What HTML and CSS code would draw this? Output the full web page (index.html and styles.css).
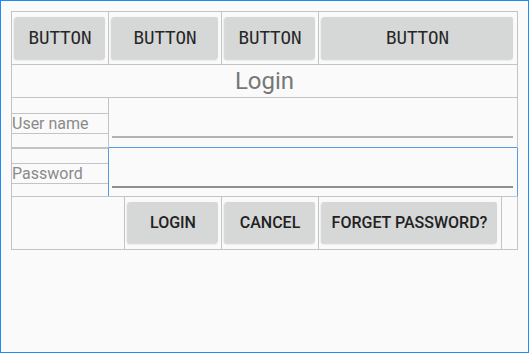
FILE: index.html
```html
<!DOCTYPE html>
<html lang="en">
<head>
  <meta charset="UTF-8" />
  <meta name="viewport" content="width=device-width, initial-scale=1.0"/>
  <title>Login</title>
  <link rel="stylesheet" href="styles.css">
</head>
<body>
  <div class="frame">
    <div class="layout">
      <div class="row toolbar">
        <div class="cell w96"><button class="btn mono">BUTTON</button></div>
        <div class="cell w112"><button class="btn mono">BUTTON</button></div>
        <div class="cell w96"><button class="btn mono">BUTTON</button></div>
        <div class="cell grow last"><button class="btn mono">BUTTON</button></div>
      </div>

      <div class="row title-row">
        <div class="title">Login</div>
      </div>

      <div class="row field-row user">
        <div class="label-cell">
          <div class="spacer top"></div>
          <div class="label">User name</div>
          <div class="spacer bottom"></div>
        </div>
        <div class="input-cell">
          <div class="input-line"></div>
        </div>
      </div>

      <div class="row field-row pass">
        <div class="label-cell">
          <div class="spacer top"></div>
          <div class="label">Password</div>
          <div class="spacer bottom"></div>
        </div>
        <div class="input-cell focused">
          <div class="input-line"></div>
        </div>
      </div>

      <div class="row actions">
        <div class="cell w112"></div>
        <div class="cell w96"><button class="btn">LOGIN</button></div>
        <div class="cell w96"><button class="btn">CANCEL</button></div>
        <div class="cell w182"><button class="btn">FORGET PASSWORD?</button></div>
        <div class="cell w15 last"></div>
      </div>
    </div>
  </div>
</body>
</html>
```

FILE: styles.css
```css
body {
  margin: 0;
  background: #fafafa;
  font-family: Roboto, "Noto Sans", sans-serif;
}

.frame {
  width: 529px;
  height: 353px;
  box-sizing: border-box;
  border: 1px solid #2089f3;
  padding: 10px;
  background: #fafafa;
}

.layout {
  width: 507px;
  box-sizing: border-box;
  border: 1px solid #c4c4c4;
}

.row {
  display: flex;
  border-bottom: 1px solid #c4c4c4;
}

.row:last-child {
  border-bottom: none;
}

.cell {
  border-right: 1px solid #c4c4c4;
  display: flex;
  flex-direction: column;
  box-sizing: content-box;
}

.cell.last {
  border-right: none;
}

.w96 { width: 96px; }
.w112 { width: 112px; }
.w182 { width: 182px; }
.w15 { width: 15px; }
.grow { flex: 1; }

/* buttons */
.btn {
  font-family: Roboto, sans-serif;
  font-weight: 500;
  font-size: 16px;
  color: #222;
  background: #d6d7d7;
  border: none;
  border-radius: 2px;
  box-shadow: -1px 1px 2px rgba(0, 0, 0, 0.18);
  padding: 0;
  cursor: pointer;
}

.btn.mono {
  font-family: "DejaVu Sans Mono", monospace;
  font-weight: normal;
  font-size: 17.5px;
  color: #262626;
}

.toolbar {
  height: 52px;
}

.toolbar .btn {
  margin: 5px 3px 0 3px;
  height: 42px;
}

.toolbar .cell.last .btn {
  margin-right: 4px;
}

.actions {
  height: 52px;
}

.actions .btn {
  margin: 5px 3px 0 3px;
  height: 41px;
}

.actions .w182 .btn {
  margin-right: 4px;
}

/* title */
.title-row {
  height: 32px;
  justify-content: center;
  align-items: center;
}

.title {
  font-size: 24px;
  color: #777;
  line-height: 32px;
}

/* fields */
.label-cell {
  width: 96px;
  border-right: 1px solid #c4c4c4;
  display: flex;
  flex-direction: column;
}

.label {
  height: 19px;
  line-height: 19px;
  font-size: 16px;
  color: #8a8a8a;
  border-bottom: 1px solid #c4c4c4;
  white-space: nowrap;
}

.spacer.top {
  border-bottom: 1px solid #c4c4c4;
}

.user {
  height: 49px;
}

.user .spacer.top { height: 15px; }
.user .spacer.bottom { height: 13px; }

.pass {
  height: 48px;
}

.pass .label-cell {
  border-top: 1px solid #c4c4c4;
}

.pass .spacer.top { height: 14px; }
.pass .spacer.bottom { height: 11px; }

.input-cell {
  flex: 1;
  display: flex;
  flex-direction: column;
  justify-content: flex-end;
}

.input-line {
  margin: 0 4px 9px 3px;
  border-bottom: 2px solid #b2b2b2;
}

.input-cell.focused {
  box-shadow: -1px 0 0 #5a9ae0, 0 -1px 0 #5a9ae0, 1px 0 0 #5a9ae0;
}

.input-cell.focused .input-line {
  border-bottom-color: #8e8e8e;
  margin-bottom: 8px;
}
```
